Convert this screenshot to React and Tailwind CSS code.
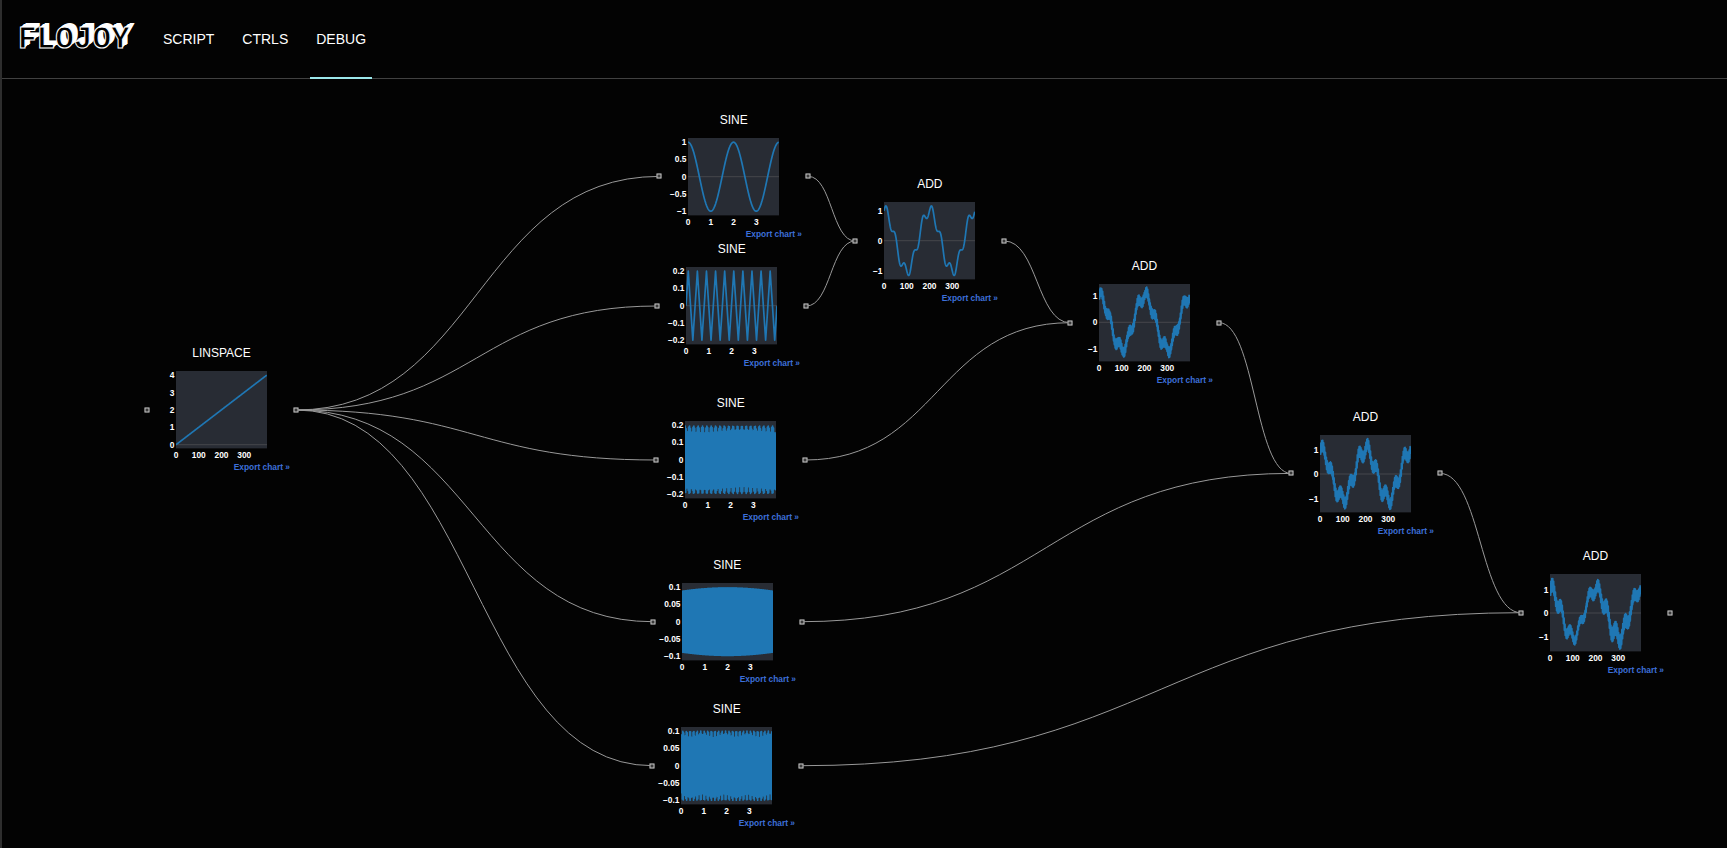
import React from 'react';

const W = 91;
const H = 77.4;

const sine1 = (x) => Math.cos(Math.PI * x);
const sine2 = (x) => 0.2 * Math.sin(5 * Math.PI * x);
const sine3 = (x) => 0.195 * Math.sin(2 * Math.PI * 26.3 * x);
const sine4 = (x, n) => (n % 2 ? -1 : 1) * 0.0975 * Math.cos((0.45 * (x - 2)) / 2);
const sine5 = (x) => 0.1 * Math.sin(2 * Math.PI * 26.6 * x + 0.7);

const add1 = (x, n) => sine1(x) + sine2(x);
const add2 = (x, n) => add1(x, n) + sine3(x);
const add3 = (x, n) => add2(x, n) + sine4(x, n);
const add4 = (x, n) => add3(x, n) + sine5(x);

const indexTicks = [0, 100, 200, 300].map((v, i) => ({ label: String(v), at: i }));
const unitTicks = [0, 1, 2, 3].map((v) => ({ label: String(v), at: v }));

// x = plot left, y = plot top, all in page pixels
const nodes = [
  { id: 'linspace', title: 'LINSPACE', x: 176, y: 371, xTicks: indexTicks, scale: 17.4, mid: 73.7, port: 39, yTicks: [['4', 4], ['3', 3], ['2', 2], ['1', 1], ['0', 0]], fn: (x) => (x * 400) / 399 },
  { id: 'sine1', title: 'SINE', x: 688.3, y: 137.7, xTicks: unitTicks, scale: 34.5, mid: 38.7, yTicks: [['1', 1], ['0.5', 0.5], ['0', 0], ['−0.5', -0.5], ['−1', -1]], fn: sine1 },
  // coarser samples here, the trace is a zigzag in the picture
  { id: 'sine2', title: 'SINE', x: 686.3, y: 267.3, xTicks: unitTicks, scale: 172.5, mid: 38.7, step: 10, yTicks: [['0.2', 0.2], ['0.1', 0.1], ['0', 0], ['−0.1', -0.1], ['−0.2', -0.2]], fn: sine2 },
  { id: 'sine3', title: 'SINE', x: 685.3, y: 421.3, xTicks: unitTicks, scale: 172.5, mid: 38.7, yTicks: [['0.2', 0.2], ['0.1', 0.1], ['0', 0], ['−0.1', -0.1], ['−0.2', -0.2]], fn: sine3 },
  { id: 'sine4', title: 'SINE', x: 681.7, y: 583, xTicks: unitTicks, scale: 345, mid: 38.7, yTicks: [['0.1', 0.1], ['0.05', 0.05], ['0', 0], ['−0.05', -0.05], ['−0.1', -0.1]], fn: sine4 },
  { id: 'sine5', title: 'SINE', x: 681.3, y: 727, xTicks: unitTicks, scale: 345, mid: 38.7, yTicks: [['0.1', 0.1], ['0.05', 0.05], ['0', 0], ['−0.05', -0.05], ['−0.1', -0.1]], fn: sine5 },
  { id: 'add1', title: 'ADD', x: 884.3, y: 202.3, xTicks: indexTicks, scale: 30, mid: 38.7, yTicks: [['1', 1], ['0', 0], ['−1', -1]], fn: add1 },
  { id: 'add2', title: 'ADD', x: 1099, y: 284, xTicks: indexTicks, scale: 26.2, mid: 38.3, yTicks: [['1', 1], ['0', 0], ['−1', -1]], fn: add2 },
  { id: 'add3', title: 'ADD', x: 1320, y: 434.7, xTicks: indexTicks, scale: 24.5, mid: 39, yTicks: [['1', 1], ['0', 0], ['−1', -1]], fn: add3 },
  { id: 'add4', title: 'ADD', x: 1550, y: 574, xTicks: indexTicks, scale: 23.5, mid: 39, yTicks: [['1', 1], ['0', 0], ['−1', -1]], fn: add4 },
];

const edges = [
  ['linspace', 'sine1'],
  ['linspace', 'sine2'],
  ['linspace', 'sine3'],
  ['linspace', 'sine4'],
  ['linspace', 'sine5'],
  ['sine1', 'add1'],
  ['sine2', 'add1'],
  ['add1', 'add2'],
  ['sine3', 'add2'],
  ['add2', 'add3'],
  ['sine4', 'add3'],
  ['add3', 'add4'],
  ['sine5', 'add4'],
];

const portY = (n) => n.y + (n.port || 38.7);
const leftPortX = (n) => n.x - 29;
const rightPortX = (n) => n.x + 120;

const edgePath = (a, b) => {
  const sx = rightPortX(a);
  const sy = portY(a);
  const tx = leftPortX(b);
  const ty = portY(b);
  const cx = (sx + tx) / 2;
  return `M${sx},${sy} C${cx},${sy} ${cx},${ty} ${tx},${ty}`;
};

const tracePoints = (node) => {
  const pts = [];
  const step = node.step || 1;
  const end = node.step ? 400 : 399;
  for (let n = 0; n <= end; n += step) {
    const x = n / 100;
    const px = (x / 4) * W;
    const py = node.mid - node.fn(x, n) * node.scale;
    pts.push(`${px.toFixed(2)},${py.toFixed(2)}`);
  }
  return pts.join(' ');
};

const Chart = ({ node }) => {
  const clipId = `clip-${node.id}`;
  return (
    <svg width="176" height="105" viewBox="-50 -5 176 105" className="block overflow-visible">
      <defs>
        <clipPath id={clipId}>
          <rect x="0" y="0" width={W} height={H} />
        </clipPath>
      </defs>
      <rect x="0" y="0" width={W} height={H} fill="#282c34" />
      <line x1="0" x2={W} y1={node.mid} y2={node.mid} stroke="#45474c" strokeWidth="1" />
      <polyline
        points={tracePoints(node)}
        fill="none"
        stroke="#1f77b4"
        strokeWidth="1.7"
        strokeLinejoin="round"
        clipPath={`url(#${clipId})`}
      />
      <g fill="#fff" fontSize="8.4" fontWeight="700" fontFamily="'Liberation Sans', Arial, sans-serif">
        {node.yTicks.map(([label, v]) => (
          <text key={label} x="-1.5" y={node.mid - v * node.scale + 3} textAnchor="end">
            {label}
          </text>
        ))}
        {node.xTicks.map((t) => (
          <text key={t.label} x={(t.at * W) / 4} y={H + 9.5} textAnchor="middle">
            {t.label}
          </text>
        ))}
      </g>
      <text x="57.7" y={H + 21.5} fill="#3d6fd8" fontSize="8.4" fontWeight="700" fontFamily="'Liberation Sans', Arial, sans-serif">
        Export chart »
      </text>
    </svg>
  );
};

const Port = ({ style }) => (
  <div className="absolute w-[5px] h-[5px] -translate-x-1/2 -translate-y-1/2 border border-[#c4c4c4] bg-[#3a3a3a]" style={style} />
);

const FlowNode = ({ node }) => (
  <>
    <div className="absolute w-[91px]" style={{ left: node.x, top: node.y - 25 }}>
      <p className="text-center text-[12px] leading-[14px] text-white whitespace-nowrap mb-[11px]">{node.title}</p>
      <div className="-ml-[50px] -mt-[5px]">
        <Chart node={node} />
      </div>
    </div>
    <Port style={{ left: leftPortX(node), top: portY(node) }} />
    <Port style={{ left: rightPortX(node), top: portY(node) }} />
  </>
);

const byId = Object.fromEntries(nodes.map((n) => [n.id, n]));

export default function App() {
  return (
    <div className="flex flex-col h-[848px] w-[1727px] overflow-hidden bg-[#030303] border-l-2 border-[#2e2e2e] font-['Liberation_Sans',Arial,sans-serif]">
      <header className="flex h-[79px] shrink-0 items-stretch border-b border-[#414141] pl-[16px]">
        <div className="w-[115px] mt-[23px] h-[34px] text-[31px] leading-[34px] font-bold font-['Liberation_Mono',monospace] text-black [-webkit-text-stroke:1px_#fff] [text-shadow:1px_-1px_0_#fff,2px_-2px_0_#fff,3px_-3px_0_#fff,4px_-3px_0_#fff,5px_-4px_0_#fff]">
          FLOJOY
        </div>
        <nav className="flex gap-[16px] ml-[24px] text-[14px] text-white">
          {['SCRIPT', 'CTRLS', 'DEBUG'].map((item) => (
            <a
              key={item}
              className={`px-[6px] pt-[29px] -mb-px border-b-2 ${item === 'DEBUG' ? 'border-[#9be7ea]' : 'border-transparent'}`}
            >
              {item}
            </a>
          ))}
        </nav>
      </header>
      <main className="relative flex-1 -ml-[2px]">
        <svg className="absolute left-0 top-[-79px] pointer-events-none" width="1727" height="848">
          {edges.map(([a, b]) => (
            <path key={a + b} d={edgePath(byId[a], byId[b])} fill="none" stroke="#999" strokeWidth="1" />
          ))}
        </svg>
        <div className="absolute left-0 top-[-79px]">
          {nodes.map((n) => (
            <FlowNode key={n.id} node={n} />
          ))}
        </div>
      </main>
    </div>
  );
}
